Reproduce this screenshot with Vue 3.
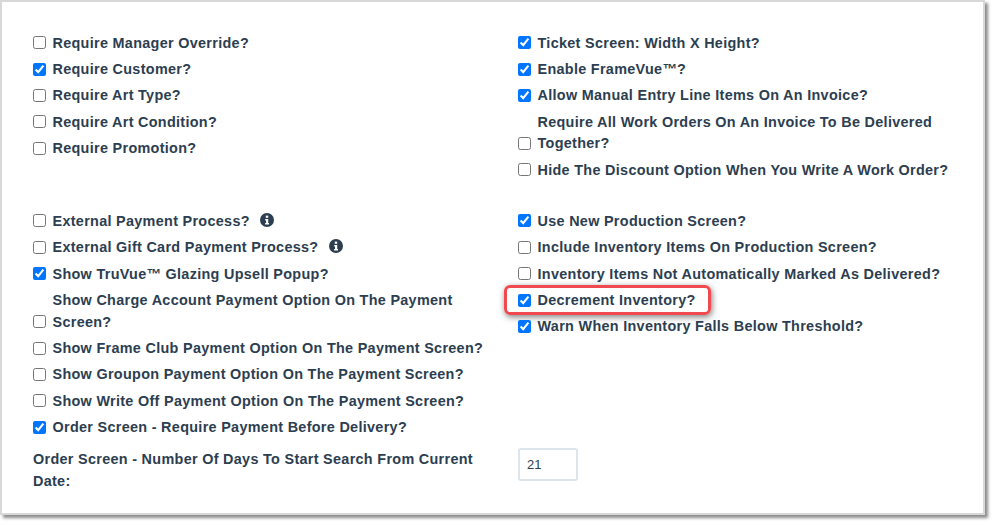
<script setup>
const sections = [
  {
    left: [
      { text: 'Require Manager Override?' },
      { text: 'Require Customer?', on: true },
      { text: 'Require Art Type?' },
      { text: 'Require Art Condition?' },
      { text: 'Require Promotion?' },
    ],
    right: [
      { text: 'Ticket Screen: Width X Height?', on: true },
      { text: 'Enable FrameVue™?', on: true },
      { text: 'Allow Manual Entry Line Items On An Invoice?', on: true },
      { text: 'Require All Work Orders On An Invoice To Be Delivered Together?' },
      { text: 'Hide The Discount Option When You Write A Work Order?' },
    ],
  },
  {
    left: [
      { text: 'External Payment Process?', info: true },
      { text: 'External Gift Card Payment Process?', info: true },
      { text: 'Show TruVue™ Glazing Upsell Popup?', on: true },
      { text: 'Show Charge Account Payment Option On The Payment Screen?' },
      { text: 'Show Frame Club Payment Option On The Payment Screen?' },
      { text: 'Show Groupon Payment Option On The Payment Screen?' },
      { text: 'Show Write Off Payment Option On The Payment Screen?' },
      { text: 'Order Screen - Require Payment Before Delivery?', on: true },
    ],
    right: [
      { text: 'Use New Production Screen?', on: true },
      { text: 'Include Inventory Items On Production Screen?' },
      { text: 'Inventory Items Not Automatically Marked As Delivered?' },
      { text: 'Decrement Inventory?', on: true, mark: true },
      { text: 'Warn When Inventory Falls Below Threshold?', on: true },
    ],
  },
]
</script>

<template>
  <div class="page">
    <div class="card">
      <section v-for="(s, i) in sections" :key="i" class="section">
        <div v-for="side in ['left', 'right']" :key="side" class="col">
          <label v-for="r in s[side]" :key="r.text" class="row">
            <span v-if="r.mark" class="mark"></span>
            <input type="checkbox" :checked="r.on" />
            <span class="txt">{{ r.text }}<svg v-if="r.info" class="info" viewBox="0 0 14 14" width="14" height="14"><circle cx="7" cy="7" r="7" fill="#2c3e50"/><rect x="5.8" y="2.6" width="2.4" height="2.2" fill="#fff"/><path d="M5.2 6h3v4h.8v1.5H5.1V10h.9V7.5h-.8z" fill="#fff"/></svg></span>
          </label>
        </div>
      </section>
      <section class="section days">
        <div class="col dayslabel">Order Screen - Number Of Days To Start Search From Current Date:</div>
        <div class="col"><input class="num" type="text" value="21" /></div>
      </section>
    </div>
  </div>
</template>

<style scoped>
.page {
  width: 994px;
  height: 525px;
  overflow: hidden;
  background: #fff;
}
.card {
  box-sizing: border-box;
  width: 985px;
  height: 515px;
  border: 2px solid #d8d8d8;
  background: #fff;
  box-shadow: 3px 3px 3px #8c8c8c;
  padding: 30.6px 0 0 31px;
  font-family: "Liberation Sans", Arial, sans-serif;
  font-size: 14.4px;
  font-weight: 700;
  line-height: 21.6px;
  color: #2c3e50;
}
.section {
  display: grid;
  grid-template-columns: 485px 436px;
  margin-bottom: 29.55px;
}
.section:nth-child(2) {
  margin-bottom: 9.3px;
}
.col {
  display: flex;
  flex-direction: column;
  gap: 4.8px;
}
.row {
  position: relative;
  display: flex;
  align-items: flex-end;
  gap: 6.5px;
}
.row input {
  flex: none;
  width: 13px;
  height: 13px;
  margin: 0 0 5px;
  accent-color: #0075ff;
}
.txt {
  flex: 1;
  max-width: 436px;
  letter-spacing: 0.31px;
}
.info {
  margin-left: 10.5px;
  vertical-align: -1px;
}
.mark {
  position: absolute;
  left: -14px;
  top: -5px;
  width: 201px;
  height: 24px;
  border: 3px solid #f0494f;
  border-radius: 6px;
  box-shadow: 1px 2px 6px rgba(0, 0, 0, 0.5);
  pointer-events: none;
}
.days {
  margin-bottom: 0;
}
.dayslabel {
  display: block;
  max-width: 450px;
  padding-top: 1px;
  letter-spacing: 0.31px;
}
.num {
  box-sizing: border-box;
  width: 60px;
  height: 33px;
  padding: 0 7px;
  border: 2px solid #dce4ec;
  border-radius: 3px;
  font-family: "Liberation Sans", Arial, sans-serif;
  font-size: 13px;
  color: #2c3e50;
  background: #fff;
}
</style>
